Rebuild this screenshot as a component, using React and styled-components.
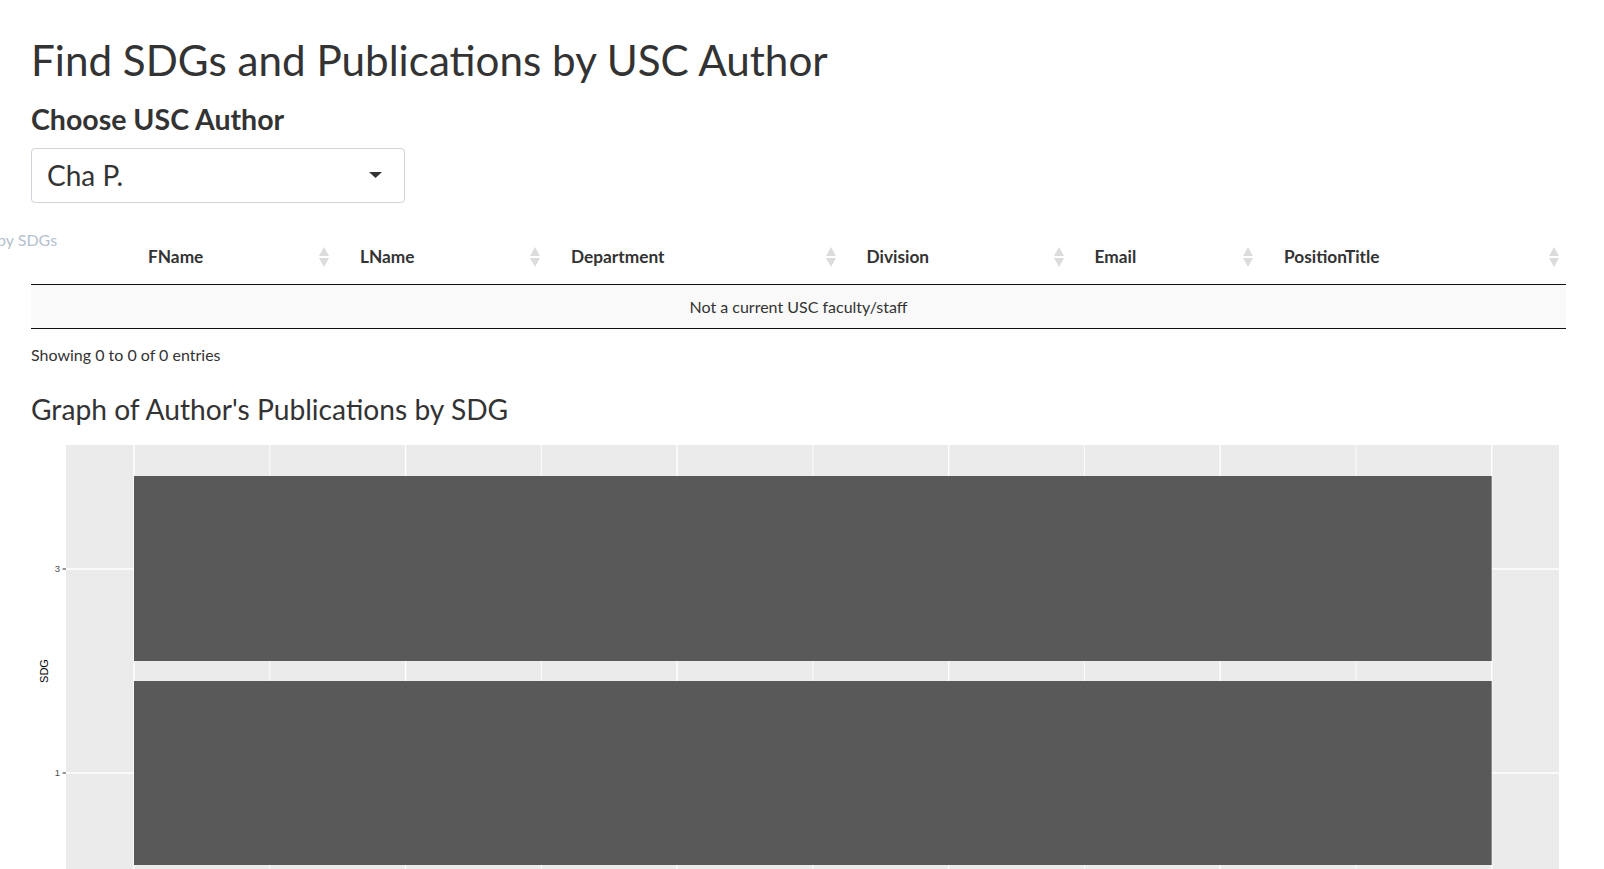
import React from "react";
import styled, { createGlobalStyle } from "styled-components";

const GlobalStyle = createGlobalStyle`
  html, body {
    margin: 0;
    padding: 0;
    overflow: hidden;
    background: #fff;
  }
  body {
    font-family: Lato, "Open Sans", sans-serif;
    color: #333;
  }
`;

const columns = ["", "FName", "LName", "Department", "Division", "Email", "PositionTitle"];
const colWidths = [107, 212, 211, 295.5, 228, 189.5, 292];

// ggplot-ish panel geometry (svg coords)
const panel = { x: 35, y: 5, w: 1493, h: 460 };
const barX0 = 103;
const step = 135.77;
const bars = [
  { label: "3", y: 36, h: 185, mid: 129 },
  { label: "1", y: 241, h: 184, mid: 333 },
];

const App = () => {
  return (
    <Page>
      <GlobalStyle />
      <Title>Find SDGs and Publications by USC Author</Title>
      <FieldLabel>Choose USC Author</FieldLabel>
      <Select>
        <span>Cha P.</span>
        <svg width="13" height="6" viewBox="0 0 13 6">
          <polygon points="0,0 13,0 6.5,6" fill="#333" />
        </svg>
      </Select>

      <TabLeftover>by SDGs</TabLeftover>

      <DataTable>
        <colgroup>
          {colWidths.map((w, i) => (
            <col key={i} style={{ width: w }} />
          ))}
        </colgroup>
        <thead>
          <tr>
            {columns.map((c, i) => (
              <HeadCell key={i}>
                <HeadInner>
                  <span>{c}</span>
                  {c && <SortIcon />}
                </HeadInner>
              </HeadCell>
            ))}
          </tr>
        </thead>
        <tbody>
          <tr>
            <EmptyCell colSpan={columns.length}>Not a current USC faculty/staff</EmptyCell>
          </tr>
        </tbody>
      </DataTable>
      <Info>Showing 0 to 0 of 0 entries</Info>

      <GraphTitle>Graph of Author's Publications by SDG</GraphTitle>
      <Plot width="1535" height="470" viewBox="0 0 1535 470">
        <rect x={panel.x} y={panel.y} width={panel.w} height={panel.h} fill="#EBEBEB" />
        {Array.from({ length: 11 }).map((_, i) => (
          <line
            key={i}
            x1={barX0 + i * step}
            x2={barX0 + i * step}
            y1={panel.y}
            y2={panel.y + panel.h}
            stroke="#fff"
            strokeWidth={i % 2 === 0 ? 1.4 : 0.9}
          />
        ))}
        {bars.map((b) => (
          <line key={b.label} x1={panel.x} x2={panel.x + panel.w} y1={b.mid} y2={b.mid} stroke="#fff" strokeWidth="1.4" />
        ))}
        {bars.map((b) => (
          <rect key={b.label} x={barX0} y={b.y} width={step * 10} height={b.h} fill="#595959" />
        ))}
        {bars.map((b) => (
          <g key={b.label}>
            <line x1={31.5} x2={panel.x} y1={b.mid} y2={b.mid} stroke="#333" strokeWidth="1" />
            <text x="29" y={b.mid + 3.3} textAnchor="end" fontSize="9.5" fill="#4D4D4D" fontFamily="'Liberation Sans', Arial, sans-serif">
              {b.label}
            </text>
          </g>
        ))}
        <text
          transform="translate(16.5 231) rotate(-90)"
          textAnchor="middle"
          fontSize="11"
          fill="#000"
          fontFamily="'Liberation Sans', Arial, sans-serif"
        >
          SDG
        </text>
      </Plot>
    </Page>
  );
};

const SortIcon = () => (
  <svg width="10" height="21" viewBox="0 0 10 21">
    <polygon points="5,0 10,9 0,9" fill="#dcdcdc" />
    <polygon points="0,11 10,11 5,20" fill="#dcdcdc" />
  </svg>
);

const Page = styled.main`
  padding: 0 38px 0 31px;
`;

const Title = styled.h1`
  margin: 35px 0 0;
  font-size: 42.2px;
  font-weight: 400;
  line-height: 1.2;
  color: #333;
`;

const FieldLabel = styled.label`
  display: block;
  margin-top: 16px;
  font-size: 28.5px;
  font-weight: 700;
  line-height: 1.2;
  color: #333;
`;

const Select = styled.div`
  margin-top: 12px;
  width: 374px;
  height: 55px;
  box-sizing: border-box;
  border: 1px solid #ced4da;
  border-radius: 4px;
  padding: 0 22px 0 15px;
  display: flex;
  align-items: center;
  justify-content: space-between;
  font-size: 28px;
  line-height: 1.2;
  color: #333;

  span {
    padding-top: 1px;
  }
`;

const TabLeftover = styled.div`
  margin: 27px 0 -12px -34px;
  font-size: 16px;
  line-height: 1.2;
  color: #b4c1cd;
`;

const DataTable = styled.table`
  width: 100%;
  table-layout: fixed;
  border-collapse: collapse;
  color: #333;
`;

const HeadCell = styled.th`
  padding: 10px 21px 16px 10px;
  border-bottom: 1px solid #111;
  font-size: 17.3px;
  font-weight: 700;
  line-height: 1.2;
  text-align: left;

  &:last-child {
    padding-right: 7px;
  }
`;

const HeadInner = styled.div`
  display: flex;
  align-items: center;
  justify-content: space-between;
  min-height: 21px;
`;

const EmptyCell = styled.td`
  padding: 12px 10px;
  background: #f9f9f9;
  border-bottom: 1px solid #111;
  text-align: center;
  font-size: 16px;
  line-height: 1.2;
`;

const Info = styled.div`
  margin-top: 16px;
  font-size: 16px;
  line-height: 1.2;
  color: #333;
`;

const GraphTitle = styled.h3`
  margin: 29px 0 0;
  font-size: 28.2px;
  font-weight: 400;
  line-height: 1.2;
  color: #333;
`;

const Plot = styled.svg`
  display: block;
  margin-top: 13px;
`;

export default App;
